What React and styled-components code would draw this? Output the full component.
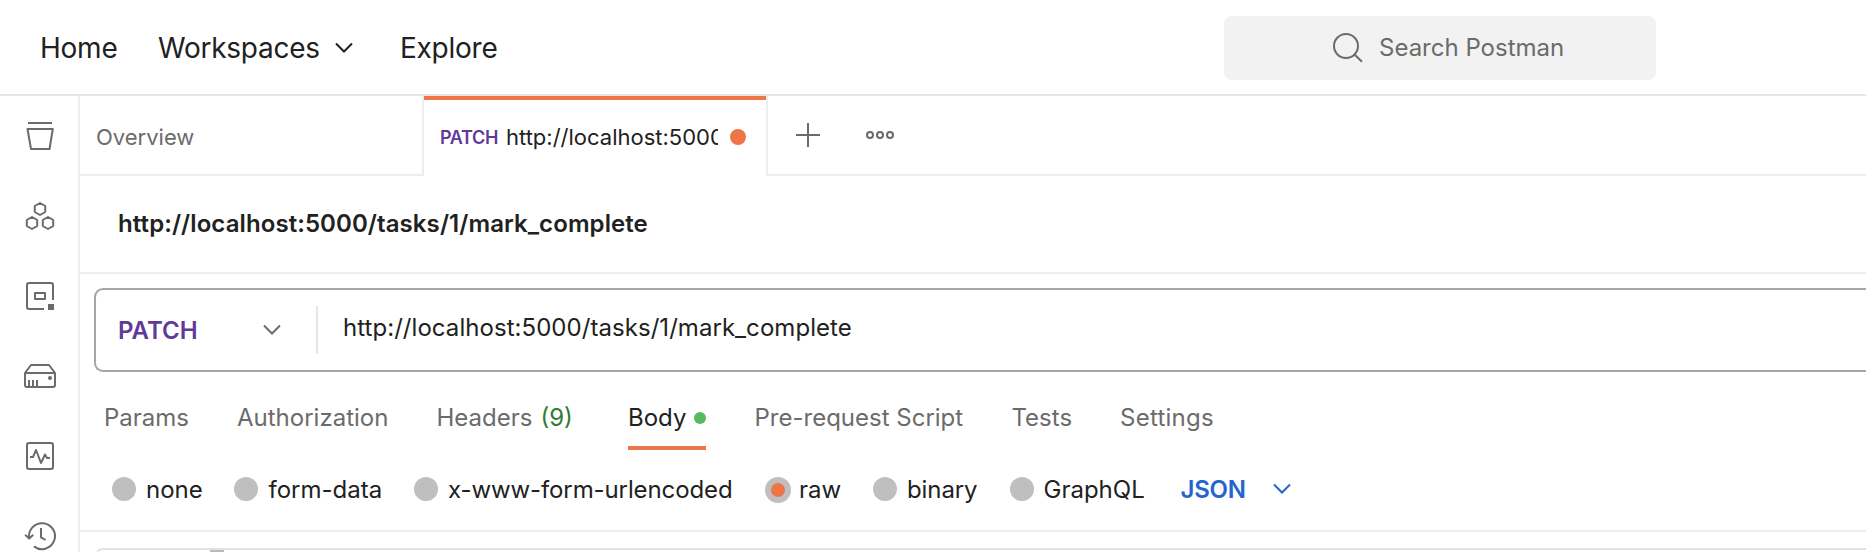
import React from "react";
import styled, { createGlobalStyle } from "styled-components";

const GlobalStyle = createGlobalStyle`
  * { box-sizing: border-box; }
  body {
    margin: 0;
    background: #fff;
    color: #212121;
    font-family: Inter, "Liberation Sans", sans-serif;
    font-size: 24px;
    overflow: hidden;
  }
`;

const Page = styled.div`
  display: flex;
  flex-direction: column;
  width: 100%;
  height: 552px;
  overflow: hidden;
  white-space: nowrap;
`;

const Header = styled.header`
  display: flex;
  flex: none;
  align-items: center;
  height: 96px;
  padding-top: 2px;
  border-bottom: 2px solid #e6e6e6;
`;

const Nav = styled.nav`
  display: flex;
  align-items: center;
  width: 1224px;
  padding-left: 40px;
  font-size: 28px;
  letter-spacing: -0.25px;
`;

const NavItem = styled.a`
  display: flex;
  align-items: center;
  gap: 15px;
  width: ${(p) => p.$width}px;
`;

const SearchBox = styled.div`
  display: flex;
  align-items: center;
  gap: 15px;
  width: 432px;
  height: 64px;
  padding: 0 0 2px 108px;
  border-radius: 8px;
  background: #f2f2f2;
  color: #6b6b6b;
`;

const Body = styled.div`
  display: flex;
  flex: 1;
  min-height: 0;
`;

const Sidebar = styled.aside`
  display: flex;
  flex: none;
  flex-direction: column;
  align-items: center;
  gap: 40px;
  width: 80px;
  padding: 20px 0 0 2px;
  border-right: 2px solid #ededed;
  overflow: hidden;
`;

const SideIcon = styled.svg`
  display: block;
  flex: none;
  width: 40px;
  height: 40px;
  fill: none;
  stroke: #6b6b6b;
  stroke-width: 2;
  stroke-linejoin: round;
`;

const Main = styled.main`
  display: flex;
  flex: 1;
  flex-direction: column;
  min-width: 0;
`;

const TabBar = styled.div`
  display: flex;
  flex: none;
  height: 80px;
  font-size: 22px;
`;

const Tab = styled.div`
  display: flex;
  align-items: center;
  width: 344px;
  padding: ${(p) => (p.$active ? "4px 20px 2px 16px" : "4px 0 0 16px")};
  border-right: 2px solid #ededed;
  border-bottom: ${(p) => (p.$active ? "none" : "2px solid #ededed")};
  color: ${(p) => (p.$active ? "#212121" : "#6b6b6b")};
  ${(p) =>
    p.$active &&
    "background: linear-gradient(#ee7546, #ee7546) 0 0 / 100% 4px no-repeat;"}
`;

const TabMethod = styled.span`
  width: 66px;
  color: #603a98;
  font-size: 18px;
  font-weight: 600;
  letter-spacing: -0.3px;
`;

const TabTitle = styled.span`
  width: 212px;
  margin-right: 12px;
  overflow: hidden;
`;

const UnsavedDot = styled.span`
  flex: none;
  width: 16px;
  height: 16px;
  border-radius: 50%;
  background: #ee7546;
`;

const TabActions = styled.div`
  display: flex;
  flex: 1;
  align-items: center;
  gap: 46px;
  padding-left: 28px;
  border-bottom: 2px solid #ededed;
`;

const Title = styled.h1`
  display: flex;
  flex: none;
  align-items: center;
  height: 98px;
  margin: 0;
  padding: 0 0 2px 38px;
  border-bottom: 2px solid #ededed;
  font-size: 24px;
  font-weight: 600;
  letter-spacing: 0.085px;
`;

const UrlBar = styled.div`
  display: flex;
  flex: none;
  align-items: center;
  height: 84px;
  margin: 14px 0 0 14px;
  border: 2px solid #a6a6a6;
  border-right: none;
  border-radius: 9px 0 0 9px;
`;

const MethodSelect = styled.div`
  display: flex;
  align-items: center;
  justify-content: space-between;
  width: 222px;
  height: 48px;
  padding: 0 35px 0 22px;
  border-right: 2px solid #e6e6e6;
  color: #603a98;
  font-weight: 600;
`;

const UrlText = styled.span`
  padding: 0 0 5px 25px;
  letter-spacing: 0.05px;
`;

const RequestTabs = styled.div`
  display: flex;
  flex: none;
  height: 78px;
  padding-left: 24px;
  color: #6b6b6b;
`;

const RequestTab = styled.div`
  display: flex;
  align-items: center;
  gap: 8px;
  height: 78px;
  width: ${(p) => p.$width}px;
  margin-right: ${(p) => p.$after || 0}px;
  padding-top: ${(p) => (p.$active ? 16 : 12)}px;
  border-bottom: ${(p) => (p.$active ? "4px solid #ee7546" : "none")};
  color: ${(p) => (p.$active ? "#212121" : "inherit")};
  letter-spacing: ${(p) => p.$spacing || 0}px;
`;

const Count = styled.span`
  color: #2f7d32;
`;

const BodyDot = styled.span`
  flex: none;
  width: 12px;
  height: 12px;
  margin: 2px 0 0 auto;
  border-radius: 50%;
  background: #57b960;
`;

const BodyTypes = styled.div`
  display: flex;
  flex: none;
  align-items: center;
  height: 82px;
  padding: 0 0 2px 32px;
  border-bottom: 2px solid #ededed;
`;

const BodyType = styled.label`
  display: flex;
  align-items: center;
  gap: ${(p) => p.$gap}px;
  width: ${(p) => p.$width}px;
  letter-spacing: ${(p) => p.$spacing || 0}px;
`;

const Radio = styled.span`
  flex: none;
  width: ${(p) => (p.$checked ? 26 : 24)}px;
  height: ${(p) => (p.$checked ? 26 : 24)}px;
  border: ${(p) => (p.$checked ? "6px solid #bfbfbf" : "none")};
  border-radius: 50%;
  background: ${(p) => (p.$checked ? "#ee7546" : "#bfbfbf")};
  ${(p) => p.$checked && "margin-top: 2px;"}
`;

const Language = styled.div`
  display: flex;
  align-items: center;
  gap: 27px;
  color: #2563cf;
  font-weight: 600;
  letter-spacing: -0.2px;
`;

const Editor = styled.div`
  flex: none;
  height: 40px;
  margin: 16px 0 0 15px;
  padding-left: 115px;
  border-top: 2px solid #e2e2e2;
  border-left: 2px solid #f2f2f2;
  border-radius: 8px 0 0 0;
`;

const EditorMark = styled.div`
  width: 14px;
  height: 8px;
  margin-left: -2px;
  background: #bbb;
`;

const Chevron = ({ color }) => (
  <svg width="18" height="12" viewBox="0 0 18 12" fill="none" stroke={color} strokeWidth="2">
    <path d="M1 1.5 9 9.5 17 1.5" />
  </svg>
);

const SearchIcon = () => (
  <svg width="32" height="32" viewBox="0 -1 32 32" fill="none" stroke="#6b6b6b" strokeWidth="2">
    <circle cx="14" cy="14" r="12" />
    <path d="M22.5 22.5 30 29.8" />
  </svg>
);

const BODY_TYPES = [
  { name: "none", width: 122, gap: 10 },
  { name: "form-data", width: 180, gap: 10.5 },
  { name: "x-www-form-urlencoded", width: 351, gap: 10, spacing: -0.1 },
  { name: "raw", width: 108, gap: 8 },
  { name: "binary", width: 137, gap: 10, spacing: -0.1 },
  { name: "GraphQL", width: 170.5, gap: 9.5 },
];

const SELECTED_TYPE = "raw";

export default function App() {
  return (
    <Page>
      <GlobalStyle />
      <Header>
        <Nav>
          <NavItem $width={118}>Home</NavItem>
          <NavItem $width={242}>
            Workspaces <Chevron color="#212121" />
          </NavItem>
          <NavItem>Explore</NavItem>
        </Nav>
        <SearchBox>
          <SearchIcon />
          Search Postman
        </SearchBox>
      </Header>
      <Body>
        <Sidebar>
          <SideIcon viewBox="0 0 40 40">
            <path d="M8 7H32M7.5 13H32.8L29.5 33H11Z" />
          </SideIcon>
          <SideIcon viewBox="0 0 40 40">
            <path d="M20 7 25.2 10V16L20 19 14.8 16V10ZM12 21 17.2 24V30L12 33 6.8 30V24ZM28 21 33.2 24V30L28 33 22.8 30V24Z" />
          </SideIcon>
          <SideIcon viewBox="0 0 40 40">
            <path d="M24 33H9Q7 33 7 31V9Q7 7 9 7H31Q33 7 33 9V24M15 17H25V23H15Z" />
            <rect x="28" y="28" width="6" height="6" fill="#6b6b6b" stroke="none" />
          </SideIcon>
          <SideIcon viewBox="0 0 40 40">
            <path d="M5 17 11 9H29L35 17V29Q35 31 33 31H7Q5 31 5 29ZM5 17H35M9 31V24M13 31V24M17 31V24" />
            <circle cx="30" cy="22" r="2" fill="#6b6b6b" stroke="none" />
          </SideIcon>
          <SideIcon viewBox="0 0 40 40">
            <rect x="7" y="7" width="26" height="26" rx="2" />
            <path d="M10 21H13L16 14 21 27 25 18.5 27 22H30" />
          </SideIcon>
          <SideIcon viewBox="0 0 40 40">
            <path d="M9.2 22.5A13 13 0 1 1 14 30.4M5.2 18.8 9.2 22.6 13.2 18.8M21 12V21.3L25.6 24" />
          </SideIcon>
        </Sidebar>
        <Main>
          <TabBar>
            <Tab>Overview</Tab>
            <Tab $active>
              <TabMethod>PATCH</TabMethod>
              <TabTitle>http://localhost:5000</TabTitle>
              <UnsavedDot />
            </Tab>
            <TabActions>
              <svg width="24" height="24" viewBox="0 0 24 24" stroke="#6b6b6b" strokeWidth="2">
                <path d="M12 0V24M0 12H24" />
              </svg>
              <svg width="28" height="10" viewBox="0 0 28 10" fill="none" stroke="#6b6b6b" strokeWidth="2">
                <circle cx="4" cy="5" r="3" />
                <circle cx="14" cy="5" r="3" />
                <circle cx="24" cy="5" r="3" />
              </svg>
            </TabActions>
          </TabBar>
          <Title>http://localhost:5000/tasks/1/mark_complete</Title>
          <UrlBar>
            <MethodSelect>
              PATCH <Chevron color="#6b6b6b" />
            </MethodSelect>
            <UrlText>http://localhost:5000/tasks/1/mark_complete</UrlText>
          </UrlBar>
          <RequestTabs>
            <RequestTab $width={133}>Params</RequestTab>
            <RequestTab $width={199.5}>Authorization</RequestTab>
            <RequestTab $width={191.5}>
              Headers <Count>(9)</Count>
            </RequestTab>
            <RequestTab $active $width={78} $after={48.5}>
              Body <BodyDot />
            </RequestTab>
            <RequestTab $width={257}>Pre-request Script</RequestTab>
            <RequestTab $width={108.5}>Tests</RequestTab>
            <RequestTab $spacing={0.25}>Settings</RequestTab>
          </RequestTabs>
          <BodyTypes>
            {BODY_TYPES.map((t) => (
              <BodyType key={t.name} $width={t.width} $gap={t.gap} $spacing={t.spacing}>
                <Radio $checked={t.name === SELECTED_TYPE} />
                {t.name}
              </BodyType>
            ))}
            <Language>
              JSON <Chevron color="#2563cf" />
            </Language>
          </BodyTypes>
          <Editor>
            <EditorMark />
          </Editor>
        </Main>
      </Body>
    </Page>
  );
}
